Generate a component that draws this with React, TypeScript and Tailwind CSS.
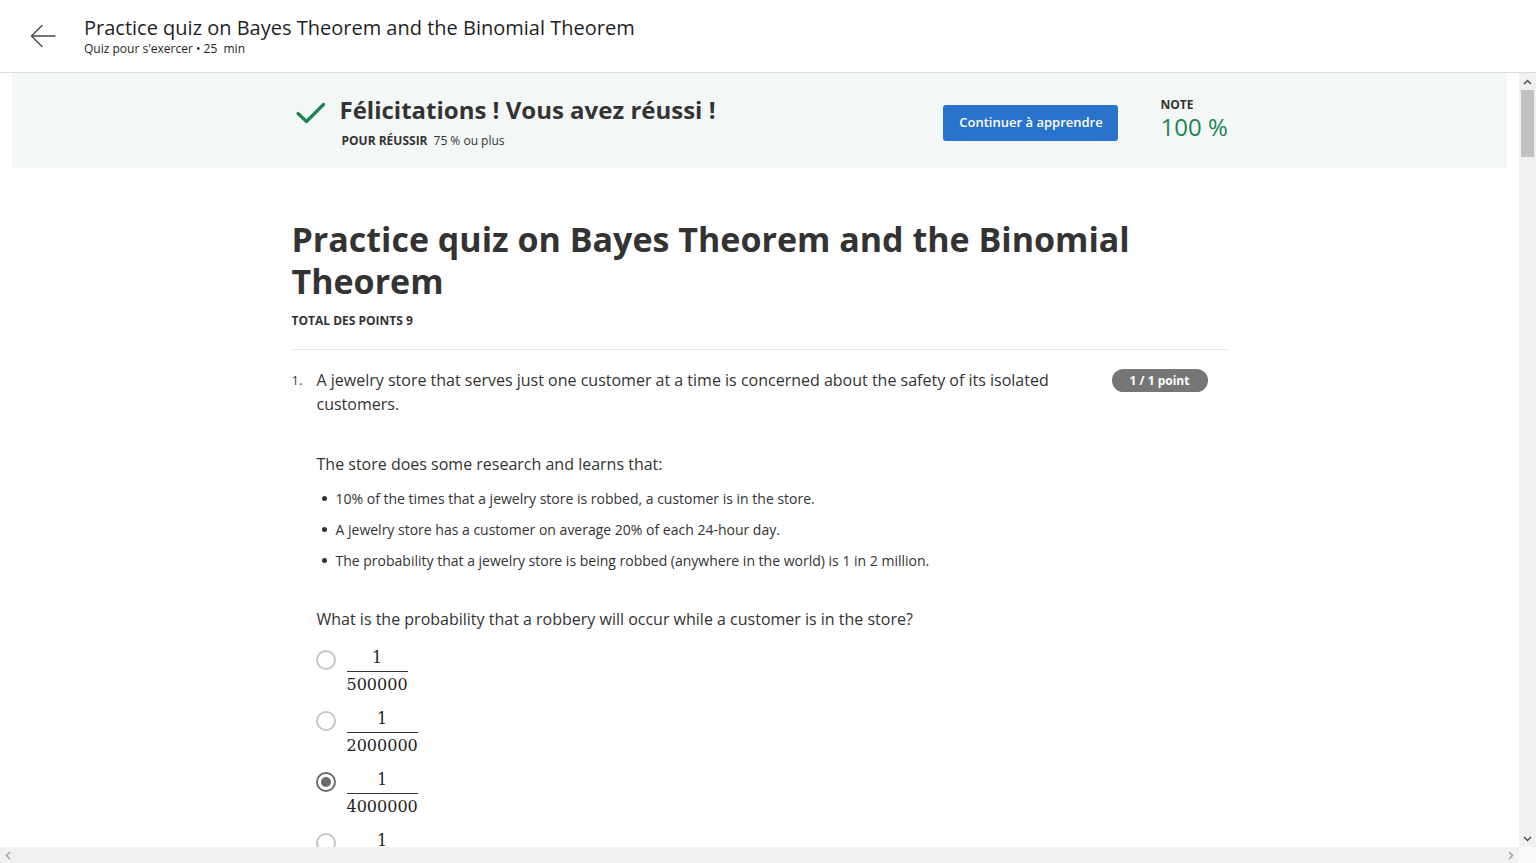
import React from "react";

const options = [
  { den: "500000", checked: false },
  { den: "2000000", checked: false },
  { den: "4000000", checked: true },
  { den: "8000000", checked: false },
];

const facts = [
  "10% of the times that a jewelry store is robbed, a customer is in the store.",
  "A jewelry store has a customer on average 20% of each 24-hour day.",
  "The probability that a jewelry store is being robbed (anywhere in the world) is 1 in 2 million.",
];

function Radio({ checked }: { checked: boolean }) {
  return (
    <span
      className={
        "mt-[3px] flex h-[20px] w-[20px] shrink-0 items-center justify-center rounded-full border-2 bg-white " +
        (checked ? "border-[#6a6a6a]" : "border-[#c6c6c6]")
      }
    >
      {checked && <span className="h-[10px] w-[10px] rounded-full bg-[#6a6a6a]" />}
    </span>
  );
}

function Fraction({ den }: { den: string }) {
  return (
    <span className="mt-[1px] inline-flex flex-col items-stretch text-[16px] text-[#222] [font-family:'DejaVu_Serif',serif]">
      <span className="pb-[3px] text-center leading-[20px]">1</span>
      <span className="border-t border-[#333] pt-[3px] text-center leading-[20px]">{den}</span>
    </span>
  );
}

export default function App() {
  return (
    <div className="flex h-[863px] w-[1536px] flex-col overflow-hidden bg-white text-[#373a3c] [font-family:'Open_Sans',sans-serif]">
      {/* top bar */}
      <header className="flex h-[73px] shrink-0 items-center border-b border-[#dcdcdc]">
        <div className="flex w-[84px] justify-center pl-[1px]">
          <svg width="26" height="24" viewBox="0 0 26 24" fill="none" stroke="#4a4a4a" strokeWidth="1.4" strokeLinecap="round">
            <path d="M25 12H2" />
            <path d="M12 1.5 1.5 12 12 22.5" />
          </svg>
        </div>
        <div className="-mt-[1px]">
          <h2 className="text-[20px] leading-[26px] text-[#1f1f1f]">
            Practice quiz on Bayes Theorem and the Binomial Theorem
          </h2>
          <p className="text-[12px] leading-[16px] text-[#1f1f1f]">Quiz pour s'exercer • 25&nbsp; min</p>
        </div>
      </header>

      <div className="flex min-h-0 flex-1">
        <main className="min-w-0 flex-1 overflow-hidden">
          {/* result banner */}
          <section className="mx-[12px] h-[95px] bg-[#f3f8f6]">
            <div className="mx-auto flex h-full w-[936px] items-center">
              <div className="flex flex-1 items-start pt-[2px]">
                <svg className="mt-[8px] ml-[4px]" width="30" height="22" viewBox="0 0 30 22" fill="none" stroke="#1f8354" strokeWidth="3.2" strokeLinecap="round" strokeLinejoin="round">
                  <path d="M2 11.5 10.5 19.5 27.5 2.5" />
                </svg>
                <div className="ml-[14px]">
                  <h1 className="text-[24px] font-bold leading-[32px] text-[#333]">
                    Félicitations ! Vous avez réussi !
                  </h1>
                  <p className="mt-[7px] pl-[2px] text-[12px] leading-[16px] text-[#333]">
                    <span className="font-bold">POUR RÉUSSIR</span>
                    <span className="ml-[6px]">75 % ou plus</span>
                  </p>
                </div>
              </div>
              <button className="mt-[5px] h-[36px] w-[175px] rounded-[3px] bg-[#2a73cc] pl-[2px] text-[13px] font-semibold text-white">
                Continuer à apprendre
              </button>
              <div className="ml-[43px] w-[67px] whitespace-nowrap pb-[2px]">
                <p className="text-[12px] font-bold leading-[16px] text-[#333]">NOTE</p>
                <p className="-mt-[1px] text-[24px] leading-[30px] text-[#1f8354]">100 %</p>
              </div>
            </div>
          </section>

          {/* quiz body */}
          <div className="mx-auto w-[936px] pt-[50px]">
            <h1 className="text-[34px] font-bold leading-[42px] text-[#333]">
              Practice quiz on Bayes Theorem and the Binomial Theorem
            </h1>
            <p className="mt-[11px] text-[12px] font-bold leading-[16px] text-[#333]">TOTAL DES POINTS 9</p>
            <hr className="mt-[20px] border-[#e5e5e5]" />

            <div className="mt-[18px] flex">
              <span className="w-[25px] shrink-0 text-[13px] leading-[24px]">1.</span>
              <div className="min-w-0 flex-1">
                <div className="flex items-start">
                  <p className="w-[775px] text-[16px] leading-[24px] text-[#333]">
                    A jewelry store that serves just one customer at a time is concerned about the safety of its isolated customers.
                  </p>
                  <span className="ml-auto mr-[20px] mt-[1px] flex h-[23px] w-[96px] items-center justify-center rounded-full bg-[#767676] text-[12px] font-bold text-white">
                    1 / 1 point
                  </span>
                </div>

                <p className="mt-[36px] text-[16px] leading-[24px] text-[#333]">
                  The store does some research and learns that:
                </p>
                <ul className="mt-[12px]">
                  {facts.map((f) => (
                    <li key={f} className="mb-[10px] flex items-center text-[14px] leading-[21px] text-[#333]">
                      <span className="ml-[5px] mr-[9px] h-[5px] w-[5px] rounded-full bg-[#333]" />
                      {f}
                    </li>
                  ))}
                </ul>

                <p className="mt-[36px] text-[16px] leading-[24px] text-[#333]">
                  What is the probability that a robbery will occur while a customer is in the store?
                </p>

                <div className="mt-[16px] flex flex-col gap-[13px]">
                  {options.map((o) => (
                    <label key={o.den} className="-ml-[1px] flex items-start gap-[11px]">
                      <Radio checked={o.checked} />
                      <Fraction den={o.den} />
                    </label>
                  ))}
                </div>
              </div>
            </div>
          </div>
        </main>

        {/* vertical scrollbar */}
        <div className="flex w-[17px] shrink-0 flex-col bg-[#f1f1f1]">
          <div className="flex h-[17px] items-center justify-center">
            <svg width="9" height="6" viewBox="0 0 9 6" fill="none" stroke="#505050" strokeWidth="1.5">
              <path d="M1 5 4.5 1.5 8 5" />
            </svg>
          </div>
          <div className="mx-[2px] h-[67px] bg-[#c1c1c1]" />
          <div className="flex-1" />
          <div className="flex h-[17px] items-center justify-center">
            <svg width="9" height="6" viewBox="0 0 9 6" fill="none" stroke="#505050" strokeWidth="1.5">
              <path d="M1 1 4.5 4.5 8 1" />
            </svg>
          </div>
        </div>
      </div>

      {/* horizontal scrollbar */}
      <div className="flex h-[16px] shrink-0">
        <div className="flex flex-1 items-center justify-between bg-[#f1f1f1] px-[5px]">
          <svg width="6" height="9" viewBox="0 0 6 9" fill="none" stroke="#a3a3a3" strokeWidth="1.5">
            <path d="M5 1 1.5 4.5 5 8" />
          </svg>
          <svg width="6" height="9" viewBox="0 0 6 9" fill="none" stroke="#a3a3a3" strokeWidth="1.5">
            <path d="M1 1 4.5 4.5 1 8" />
          </svg>
        </div>
        <div className="w-[17px] bg-[#fafafa]" />
      </div>
    </div>
  );
}
